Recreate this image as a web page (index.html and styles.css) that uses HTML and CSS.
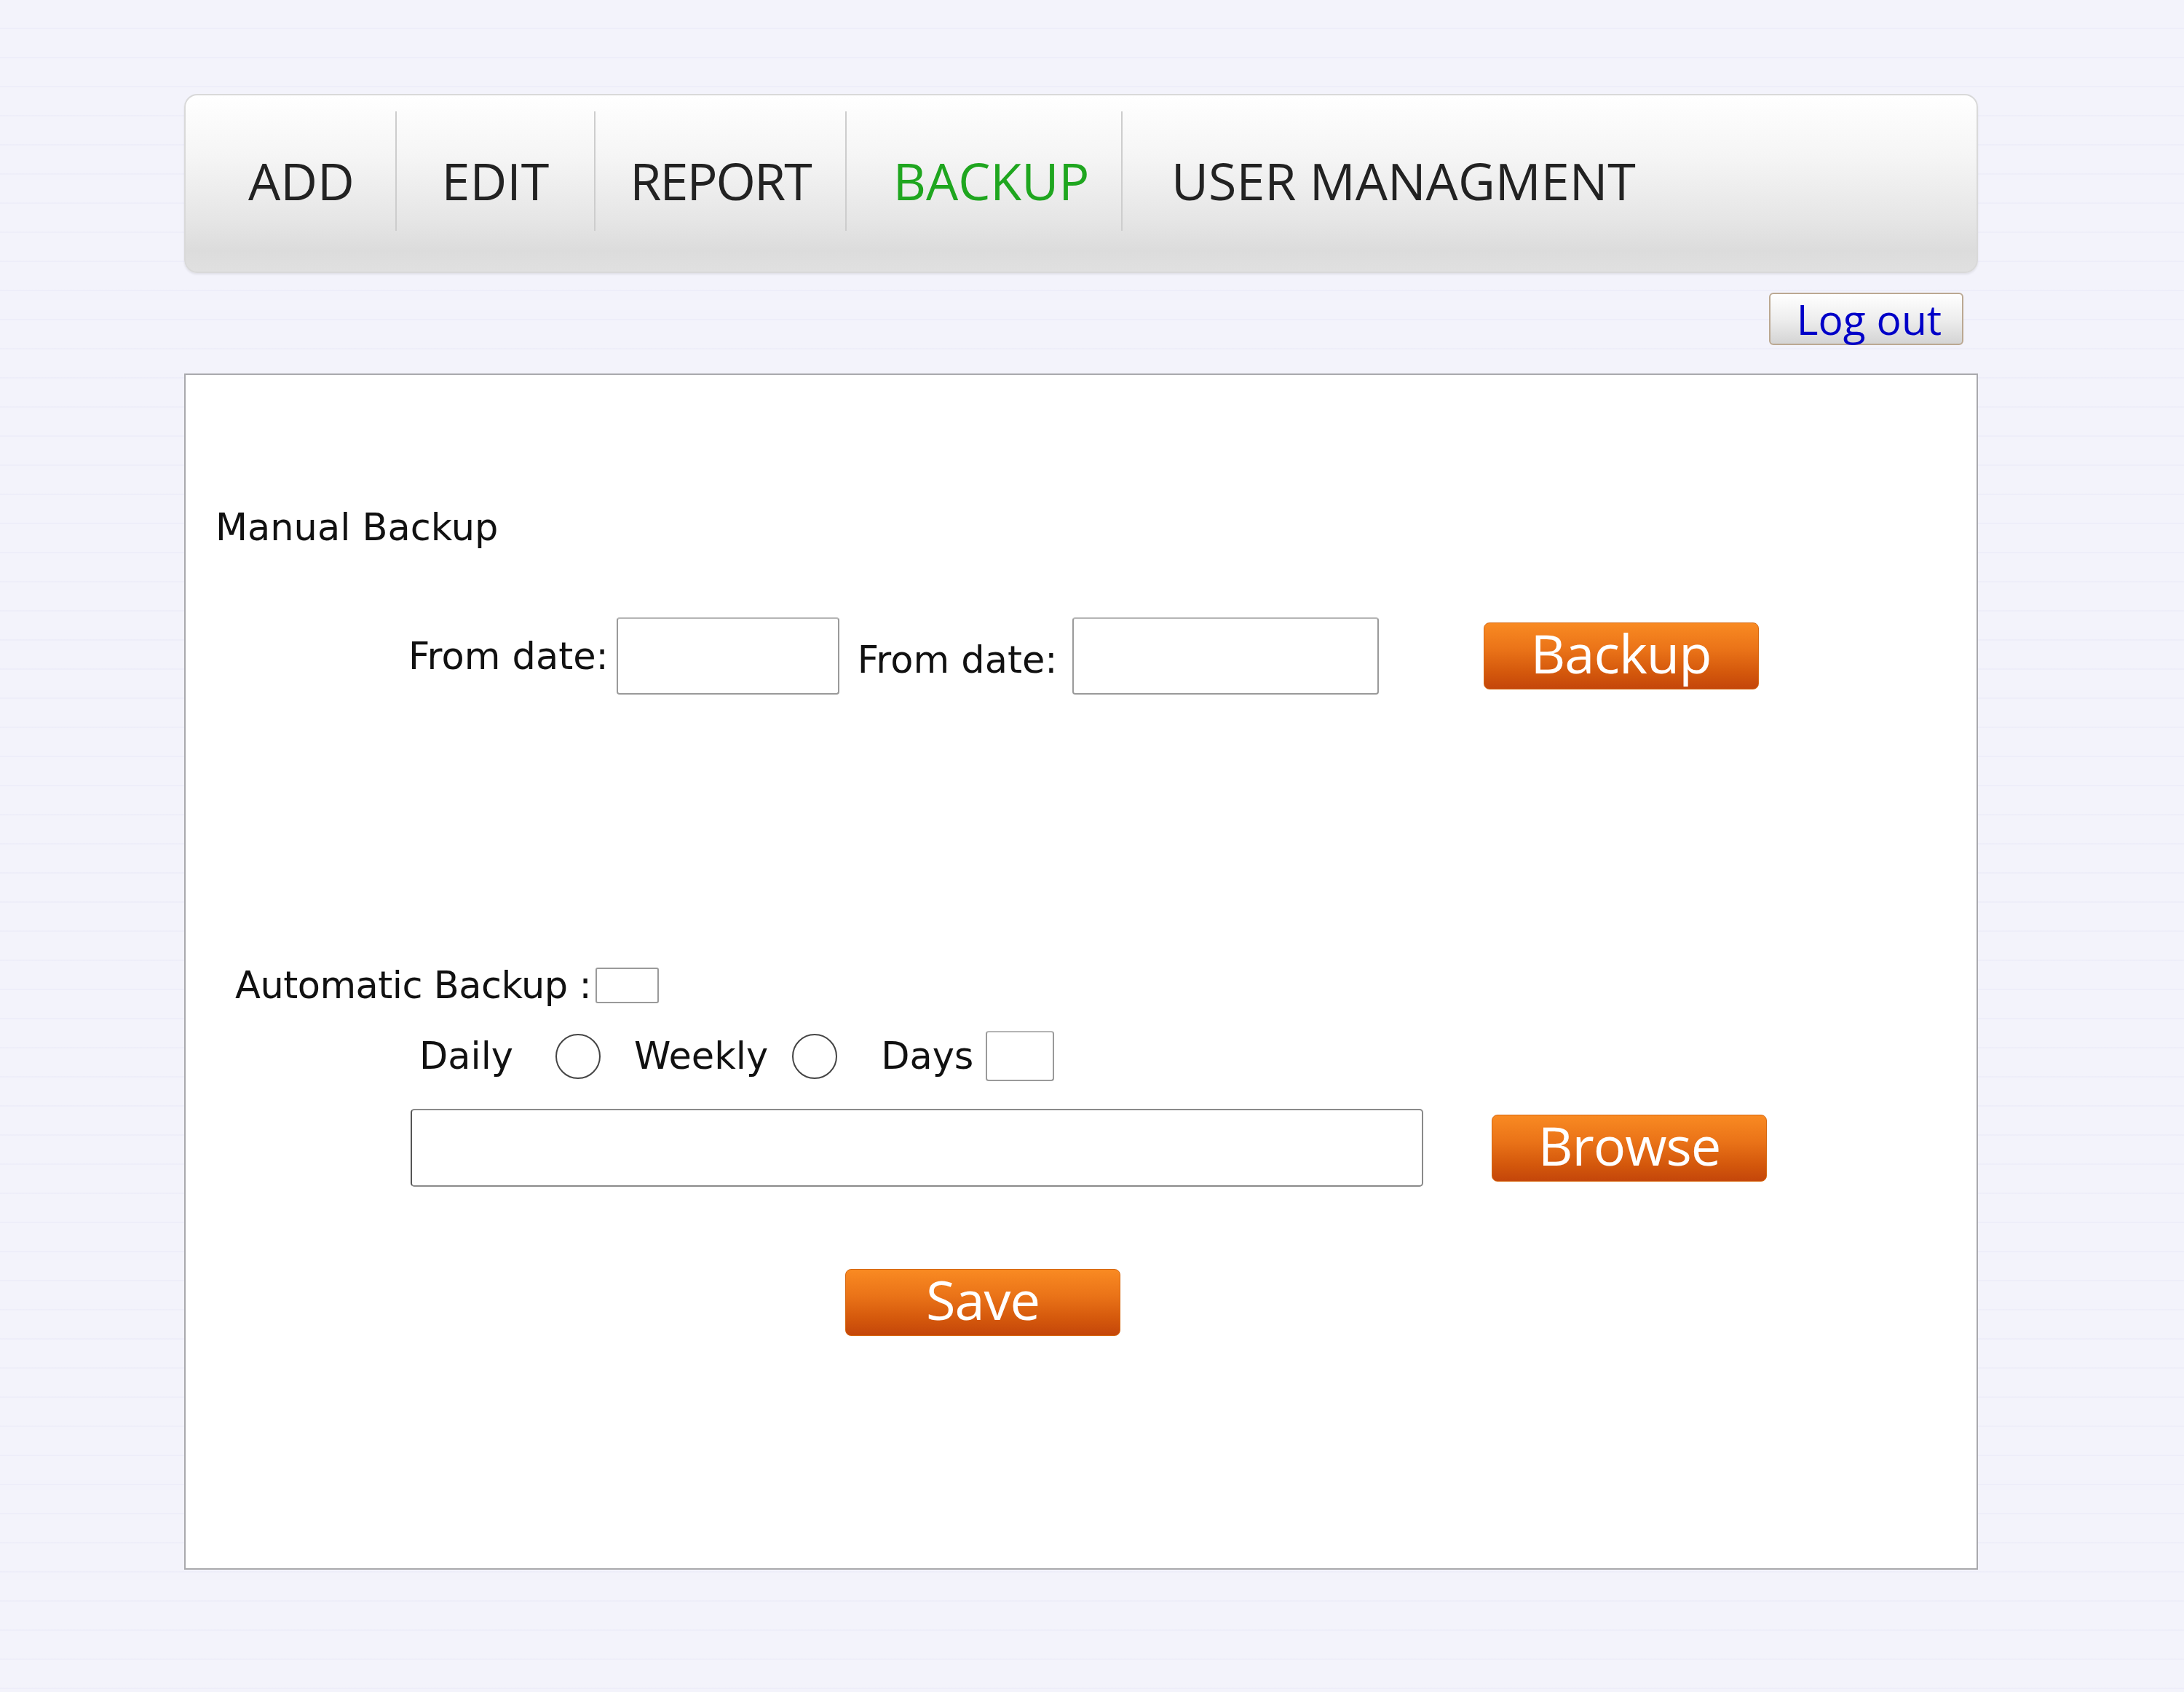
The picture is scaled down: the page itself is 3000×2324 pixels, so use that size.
FILE: index.html
```html
<!DOCTYPE html>
<html lang="en">
<head>
<meta charset="utf-8">
<title>Backup</title>
<link rel="stylesheet" href="styles.css">
</head>
<body>
<div class="page">
  <nav class="nav">
    <a class="nav-item nav-add">ADD</a>
    <a class="nav-item nav-edit">EDIT</a>
    <a class="nav-item nav-report">REPORT</a>
    <a class="nav-item nav-backup active">BACKUP</a>
    <a class="nav-item nav-user">USER MANAGMENT</a>
  </nav>
  <div class="logout-row">
    <button class="logout">Log out</button>
  </div>
  <main class="panel">
    <h2 class="heading">Manual Backup</h2>
    <div class="row row-manual">
      <label class="lbl">From date:</label>
      <input class="field date1" type="text">
      <label class="lbl lbl-date2">From date:</label>
      <input class="field date2" type="text">
      <button class="obtn obtn-backup">Backup</button>
    </div>
    <div class="row row-auto">
      <label class="lbl lbl-auto">Automatic Backup :</label>
      <input class="check" type="checkbox">
    </div>
    <div class="row row-freq">
      <span class="lbl">Daily</span>
      <input class="radio radio-daily" type="radio" name="freq">
      <span class="lbl lbl-weekly">Weekly</span>
      <input class="radio radio-weekly" type="radio" name="freq">
      <span class="lbl lbl-days">Days</span>
      <input class="field days" type="text">
    </div>
    <div class="row row-path">
      <input class="field path" type="text">
      <button class="obtn obtn-browse">Browse</button>
    </div>
    <div class="row row-save">
      <button class="obtn">Save</button>
    </div>
  </main>
</div>
</body>
</html>
```
FILE: styles.css
```css
html, body {
  margin: 0;
  padding: 0;
}
body {
  min-height: 2324px;
  background-color: #f3f3fb;
  background-image: repeating-linear-gradient(180deg, rgba(255,255,255,0) 0, rgba(255,255,255,0) 38px, rgba(230,230,246,0.4) 38px, rgba(230,230,246,0.4) 40px);
  font-family: "DejaVu Sans", sans-serif;
}
.page {
  width: 2464px;
  margin-left: 253px;
  padding-top: 129px;
}
.nav {
  height: 246px;
  box-sizing: border-box;
  border: 2px solid #d9d9d9;
  border-radius: 18px;
  background: linear-gradient(180deg, #ffffff 0%, #f5f5f5 35%, #e6e6e6 70%, #dcdcdc 88%, #e0e0e0 100%);
  box-shadow: 0 2px 3px rgba(0,0,0,0.08);
  padding-top: 22px;
  display: flex;
  align-items: flex-start;
}
.nav-item {
  height: 164px;
  box-sizing: border-box;
  padding-top: 26px;
  line-height: 138px;
  font-family: "Open Sans", sans-serif;
  font-size: 70px;
  color: #222;
  text-align: center;
  border-right: 2px solid #cdcdcd;
  white-space: nowrap;
}
.nav-add { width: 290px; padding-left: 30px; }
.nav-edit { width: 273px; }
.nav-report { width: 345px; letter-spacing: -2px; }
.nav-backup { width: 379px; padding-left: 20px; }
.nav-user {
  border-right: none;
  padding-left: 67px;
  text-align: left;
}
.active { color: #1fa61f; }
.logout-row {
  display: flex;
  justify-content: flex-end;
  padding-right: 20px;
  margin-top: 27px;
}
.logout {
  width: 267px;
  height: 72px;
  box-sizing: border-box;
  border: 2px solid #bba892;
  border-radius: 6px;
  background: linear-gradient(180deg, #ffffff 0%, #eeeeee 50%, #d4d4d4 100%);
  font-family: "Open Sans", sans-serif;
  font-size: 57px;
  line-height: 62px;
  color: #0000c8;
  padding: 0 0 0 8px;
}
.panel {
  display: block;
  margin-top: 39px;
  height: 1643px;
  box-sizing: border-box;
  border: 2px solid #a9a9ad;
  background: #ffffff;
  padding-top: 180px;
}
.heading {
  margin: 0 0 0 41px;
  font-weight: normal;
  font-size: 51px;
  line-height: 59px;
  color: #111;
}
.row {
  display: flex;
  align-items: center;
}
.lbl {
  font-size: 51px;
  line-height: 59px;
  color: #111;
  white-space: nowrap;
}
.lbl-auto { letter-spacing: -0.5px; }
.field {
  -webkit-appearance: none;
  appearance: none;
  box-sizing: border-box;
  margin: 0;
  border: 2px solid #9a9a9a;
  border-top-color: #b5b5b5;
  border-radius: 4px;
  background: #fff;
  padding: 0;
}
.row-manual {
  margin-top: 94px;
  padding-left: 306px;
}
.date1 {
  width: 306px;
  height: 106px;
  margin-left: 11px;
}
.lbl-date2 {
  margin-left: 25px;
  position: relative;
  top: 5px;
}
.date2 {
  width: 421px;
  height: 106px;
  margin-left: 20px;
}
.obtn {
  width: 378px;
  height: 92px;
  box-sizing: border-box;
  border: 1px solid #d6670f;
  border-radius: 8px;
  background: linear-gradient(180deg, #f98a22 0%, #ea7318 40%, #d4580c 75%, #c4460a 100%);
  color: #ffffff;
  font-family: "Open Sans", sans-serif;
  font-size: 74px;
  letter-spacing: -1px;
  line-height: 82px;
  padding: 0 0 8px 0;
  text-align: center;
}
.obtn-backup { margin-left: 144px; }
.row-auto {
  margin-top: 370px;
  padding-left: 68px;
}
.check {
  -webkit-appearance: none;
  appearance: none;
  margin: 0 0 0 6px;
  width: 87px;
  height: 49px;
  box-sizing: border-box;
  border: 2px solid #9a9a9a;
  border-radius: 3px;
  background: #fff;
}
.row-freq {
  margin-top: 33px;
  padding-left: 321px;
}
.radio {
  -webkit-appearance: none;
  appearance: none;
  margin: 0;
  width: 62px;
  height: 62px;
  box-sizing: border-box;
  border: 2px solid #444;
  border-radius: 50%;
  background: #fff;
}
.radio-daily { margin-left: 58px; }
.lbl-weekly { margin-left: 46px; }
.radio-weekly { margin-left: 33px; }
.lbl-days { margin-left: 60px; }
.days {
  width: 94px;
  height: 69px;
  margin-left: 17px;
}
.row-path {
  margin-top: 38px;
  padding-left: 309px;
}
.path {
  width: 1391px;
  height: 107px;
  border: 2px solid #8a8a8a;
  border-left-color: #555;
  border-radius: 5px;
}
.obtn-browse { margin-left: 94px; }
.row-save {
  margin-top: 113px;
  padding-left: 906px;
}
```
